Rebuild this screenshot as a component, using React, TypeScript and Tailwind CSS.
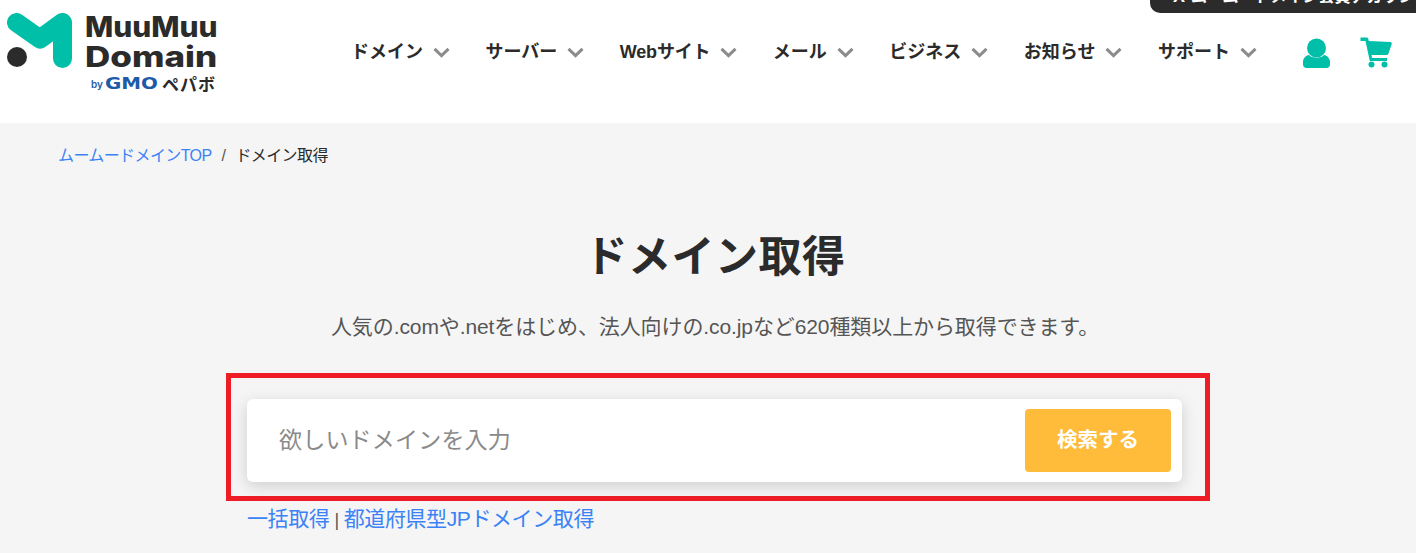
import React from 'react';

const FONT = "font-['Liberation_Sans','Noto_Sans_CJK_JP',sans-serif]";

const navItems = ['ドメイン', 'サーバー', 'Webサイト', 'メール', 'ビジネス', 'お知らせ', 'サポート'];

const Chevron: React.FC = () => (
  <svg width="17" height="11" viewBox="0 0 17 11" fill="none" className="shrink-0">
    <path d="M1.5 1.8 L8.5 8.6 L15.5 1.8" stroke="#8c8c8c" strokeWidth="3" />
  </svg>
);

const Logo: React.FC = () => (
  <div className="flex w-[216px] flex-col">
    <div className="flex items-start">
      <svg width="66" height="56" viewBox="0 0 66 56" className="mt-[13px] ml-[7px] shrink-0">
        <path
          d="M9.500 9.500 L33 26 L55.500 9.500 L55.500 45.500"
          fill="none"
          stroke="#00bfa8"
          strokeWidth="19"
          strokeLinecap="round"
          strokeLinejoin="round"
        />
        <circle cx="10" cy="44" r="10" fill="#2b2b2b" />
      </svg>
      <div className="mt-[12px] ml-[12px] font-['Inter',sans-serif] text-[28px] leading-[30px] font-extrabold text-[#2b2b2b]">
        <div className="origin-left scale-x-[1.07]">MuuMuu</div>
        <div className="origin-left scale-x-[1.25]">Domain</div>
      </div>
    </div>
    <div className="mt-[5px] flex items-center justify-end gap-[3px] leading-[14px]">
      <span className="font-['Inter',sans-serif] text-[10px] font-semibold text-[#1d5aa8]">by</span>
      <span className="-ml-px inline-block w-[54px] origin-left scale-x-[1.24] font-['DejaVu_Sans',sans-serif] text-[16px] font-bold text-[#1d5aa8]">GMO</span>
      <span className="font-['Noto_Sans_CJK_JP',sans-serif] text-[17px] leading-[14px] font-bold tracking-[1px] text-[#2b2b2b]">ペパボ</span>
    </div>
  </div>
);

const NavItem: React.FC<{ label: string }> = ({ label }) => (
  <a className="flex items-center gap-[10px] text-[18px] font-bold text-[#2b2b2b]">
    <span className={label === 'Webサイト' ? 'tracking-[-0.2px]' : ''}>{label}</span>
    <Chevron />
  </a>
);

export default function App() {
  return (
    <div className={`${FONT} relative h-[553px] overflow-hidden bg-[#f5f5f5]`}>
      <div className="absolute top-0 right-0 flex h-[13px] w-[266px] items-end gap-[6px] overflow-hidden rounded-bl-[10px] bg-[#2b2b2b] pb-[7px] pl-[23px] text-[16px] leading-[19px] font-bold whitespace-nowrap text-white">
        <span className="w-[13px] text-[18px]">X</span>
        <span>ムームードメイン会員アカウント</span>
      </div>

      <header className="flex h-[123px] items-start bg-white">
        <Logo />
        <nav className="mt-[39px] ml-[135px] flex items-center gap-[35.5px]">
          {navItems.map((item) => (
            <NavItem key={item} label={item} />
          ))}
        </nav>
        <div className="mt-[37px] ml-[46px] flex items-center gap-[30px]">
          <svg width="27" height="30" viewBox="0 0 27 30">
            <circle cx="13.500" cy="10" r="9.500" fill="#00bfa8" />
            <path d="M6 17 C9 20.500 18 20.500 21 17 C24.500 17.500 27 20.500 27 24 L27 26.500 C27 28.500 25.500 30 23.500 30 L3.500 30 C1.500 30 0 28.500 0 26.500 L0 24 C0 20.500 2.500 17.500 6 17 Z" fill="#00bfa8" />
          </svg>
          <svg width="32" height="31" viewBox="0 0 32 31">
            <path d="M0.500 0.500 L6.500 0.500 C7.500 0.500 8 1 8.300 2 L8.800 4 L30.500 5 C31.500 5 32 6 31.700 7 L28.500 16.500 C28.200 17.300 27.600 18 26.700 18 L11.500 18 L12 21 L27 21 L27 24 L9.800 24 L5.500 4 L0.500 4 Z" fill="#00bfa8" />
            <circle cx="11.500" cy="27.500" r="3" fill="#00bfa8" />
            <circle cx="24.500" cy="27.500" r="3" fill="#00bfa8" />
          </svg>
        </div>
      </header>

      <div className="flex items-center pt-[23px] pl-[58px] text-[16px] leading-[20px] tracking-[-0.6px]">
        <a className="text-[#3b82f6]">ムームードメインTOP</a>
        <span className="mx-[10px] text-[#555]">/</span>
        <span className="text-[#2b2b2b]">ドメイン取得</span>
      </div>

      <main className="flex flex-col items-center">
        <h1 className="mt-[61px] ml-[14px] text-[43px] leading-[60px] font-bold tracking-[0.5px] text-[#2b2b2b]">ドメイン取得</h1>
        <p className="mt-[25px] ml-[14px] text-[21px] leading-[30px] tracking-[-0.1px] whitespace-nowrap text-[#555]">
          人気の.comや.netをはじめ、法人向けの.co.jpなど620種類以上から取得できます。
        </p>
        <div className="mt-[31px] ml-[20px] h-[128px] w-[984px] border-[5px] border-[#ee1c25] pt-[21px] pl-[16px]">
          <div className="flex h-[83px] w-[935px] items-center justify-between rounded-[6px] bg-white pr-[11px] pl-[32px] shadow-[0_4px_16px_rgba(0,0,0,0.16)]">
            <span className="text-[23px] tracking-[0.2px] text-[#8a8a8a]">欲しいドメインを入力</span>
            <button className="flex h-[63px] w-[146px] items-center justify-center rounded-[4px] bg-[#ffbb3a] text-[20.500px] font-bold text-white">
              検索する
            </button>
          </div>
        </div>
        <div className="mt-[3px] ml-[20px] w-[984px] pl-[21px] text-[21px] leading-[30px] tracking-[-0.4px] text-[#3b82f6]">
          <a>一括取得</a>
          <span className="mx-[5px] text-[18px] text-[#555]">|</span>
          <a>都道府県型JPドメイン取得</a>
        </div>
      </main>
    </div>
  );
}
